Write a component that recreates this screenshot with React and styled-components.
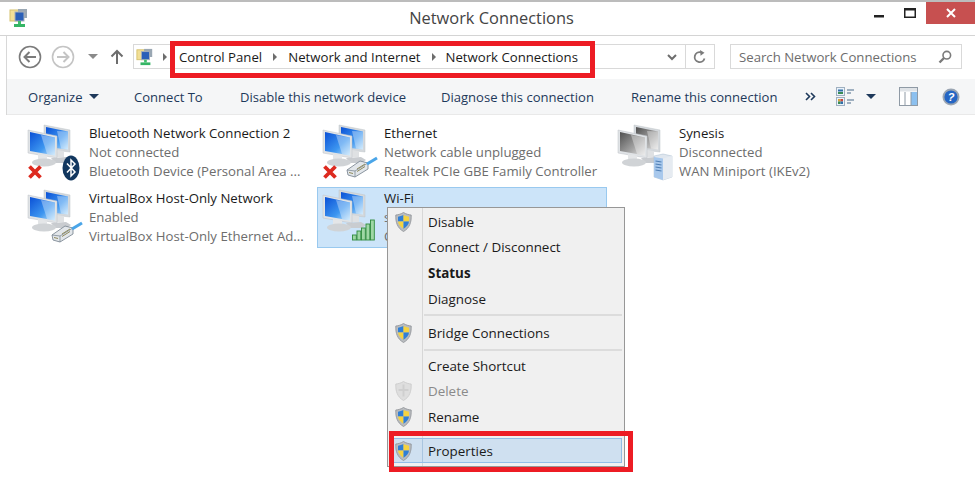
import React from "react";
import styled, { createGlobalStyle } from "styled-components";

const GlobalStyle = createGlobalStyle`
  html, body { margin: 0; padding: 0; background: #fff; }
  body { font-family: "Open Sans", "Noto Sans", sans-serif; font-size: 13.2px; }
`;

const Window = styled.div`
  position: relative;
  width: 975px;
  height: 490px;
  overflow: hidden;
  background: #fff;
  border-top: 2px solid #bcbcbc;
  box-sizing: border-box;
`;

const TitleBar = styled.div`
  height: 33px;
  display: flex;
  align-items: flex-start;
  padding-left: 9px;
  background: #fff;
  border-bottom: 1px solid #d4d4d4;
`;

const AppIcon = styled.div`
  margin-top: 6px;
  width: 20px;
`;

const Title = styled.div`
  flex: 1;
  text-align: center;
  font-size: 16.4px;
  line-height: 31px;
  color: #444;
  padding-left: 90px;
`;

const WinButtons = styled.div`
  display: flex;
  align-items: flex-start;
`;

const WinBtn = styled.div`
  width: ${(p) => p.$w}px;
  height: 22px;
  box-sizing: border-box;
  padding-top: ${(p) => p.$top || 0}px;
  display: flex;
  align-items: center;
  justify-content: center;
  background: ${(p) => (p.$close ? "#c75050" : "transparent")};
`;

const Header = styled.div`
  margin-left: 6px;
  border-left: 1px solid #d8d8d8;
`;

const NavRow = styled.div`
  height: 43px;
  display: flex;
  align-items: center;
  box-sizing: border-box;
  padding: 0 0 2px 11px;
`;

const NavBtn = styled.div`
  width: ${(p) => p.$w}px;
  flex: none;
  display: flex;
  justify-content: center;
  align-items: center;
`;

const AddressBox = styled.div`
  width: 582px;
  height: 25px;
  flex: none;
  box-sizing: border-box;
  border: 1px solid #d9d9d9;
  display: flex;
  align-items: center;
  padding-left: 2px;
`;

const Crumb = styled.span`
  color: #1a1a1a;
  white-space: nowrap;
`;

const CrumbSep = styled.span`
  width: 0;
  height: 0;
  border-left: 4px solid #6d6d6d;
  border-top: 4px solid transparent;
  border-bottom: 4px solid transparent;
  margin: 0 ${(p) => p.$right || 10}px 0 ${(p) => p.$left || 10}px;
`;

const AddressEnd = styled.div`
  margin-left: auto;
  display: flex;
  align-items: center;
  height: 100%;
`;

const RefreshCell = styled.div`
  width: 28px;
  height: 100%;
  border-left: 1px solid #d9d9d9;
  margin-left: 8px;
  display: flex;
  align-items: center;
  justify-content: center;
`;

const SearchBox = styled.div`
  width: 232px;
  height: 25px;
  flex: none;
  box-sizing: border-box;
  border: 1px solid #d9d9d9;
  margin-left: 15px;
  display: flex;
  align-items: center;
  justify-content: space-between;
  padding: 0 9px 0 8px;
  color: #6d6d6d;
`;

const CommandBar = styled.div`
  height: 35px;
  display: flex;
  align-items: center;
  background: #f5f6f7;
  border-bottom: 1px solid #e9e9e9;
  padding-left: 21px;
  color: #1e395b;
  font-size: 13.05px;
`;

const Command = styled.div`
  width: ${(p) => p.$w}px;
  display: flex;
  align-items: center;
  white-space: nowrap;
  flex: none;
`;

const DownCaret = styled.span`
  width: 0;
  height: 0;
  border-top: 5px solid ${(p) => p.$color || "#1e395b"};
  border-left: 5px solid transparent;
  border-right: 5px solid transparent;
  margin-left: ${(p) => p.$m || 6}px;
`;

const Grid = styled.div`
  display: grid;
  grid-template-columns: repeat(3, 295px);
  grid-auto-rows: 61px;
  row-gap: 4px;
  padding: 7px 0 0 22px;
`;

const Tile = styled.div`
  width: 290px;
  box-sizing: border-box;
  display: flex;
  border: 1px solid ${(p) => (p.$selected ? "#99c9ef" : "transparent")};
  background: ${(p) => (p.$selected ? "#cce4f9" : "transparent")};
  padding-left: 4px;
`;

const TileIcon = styled.div`
  width: 62px;
  flex: none;
`;

const TileText = styled.div`
  display: flex;
  flex-direction: column;
  padding-top: 1px;
  min-width: 0;
`;

const TileName = styled.div`
  color: #1a1a1a;
  line-height: 19px;
  white-space: nowrap;
`;

const TileLine = styled.div`
  color: #6d6d6d;
  line-height: 19px;
  white-space: nowrap;
`;

const Menu = styled.div`
  position: absolute;
  left: 387px;
  top: 205px;
  width: 238px;
  height: 260px;
  box-sizing: border-box;
  border: 1px solid #979797;
  padding: 1px 2px;
  font-size: 13.4px;
  background: linear-gradient(to right, #f0f0f0 34px, #d7d7d7 34px, #d7d7d7 35px, #f0f0f0 35px);
`;

const MenuRow = styled.div`
  height: 25.6px;
  box-sizing: border-box;
  display: flex;
  align-items: center;
  color: ${(p) => (p.$disabled ? "#8a8a8a" : "#1a1a1a")};
  font-weight: ${(p) => (p.$bold ? 700 : 400)};
  border: 1px solid ${(p) => (p.$active ? "#92bde6" : "transparent")};
  background: ${(p) =>
    p.$active
      ? "linear-gradient(to right, #cfe0f0 31px, #a9c5df 31px, #a9c5df 32px, #cfe0f0 32px)"
      : "transparent"};
`;

const MenuIcon = styled.div`
  width: 37px;
  flex: none;
  display: flex;
  justify-content: center;
  padding-right: 12px;
  box-sizing: border-box;
`;

const MenuSep = styled.div`
  height: 2px;
  margin: ${(p) => p.$top}px 0 ${(p) => p.$bottom}px 34px;
  background: #dcdcdc;
`;

const RedBox = styled.div`
  position: absolute;
  box-sizing: border-box;
  border: 5px solid #ed1c24;
  left: ${(p) => p.$x}px;
  top: ${(p) => p.$y}px;
  width: ${(p) => p.$w}px;
  height: ${(p) => p.$h}px;
`;

const ControlPanelIcon = ({ size = 20 }) => (
  <svg width={size} height={size} viewBox="0 0 20 20">
    <rect x="1" y="2" width="9" height="11" fill="#f2df96" stroke="#d6c16c" />
    <rect x="9" y="1" width="9" height="9" fill="#9aa7b3" />
    <rect x="6" y="4" width="9" height="9" fill="#2a5fb8" stroke="#a7b0ba" />
    <rect x="9" y="13" width="3" height="3" fill="#3fbf6a" />
    <rect x="5" y="16" width="11" height="3" fill="#35b565" />
  </svg>
);

const BackIcon = ({ faded }) => {
  const c = faded ? "#c4c4c4" : "#7b7b7b";
  return (
    <svg width="24" height="24" viewBox="0 0 24 24" fill="none">
      <circle cx="12" cy="12" r="10.5" stroke={c} strokeWidth="1.6" />
      <path
        d={faded ? "M6 12h11M12.500 7l5 5-5 5" : "M18 12H7M11.500 7l-5 5 5 5"}
        stroke={c}
        strokeWidth="2"
      />
    </svg>
  );
};

const UpIcon = () => (
  <svg width="14" height="16" viewBox="0 0 14 16" fill="none">
    <path d="M7 15V2M1.500 7.500L7 2l5.500 5.500" stroke="#6d6d6d" strokeWidth="2" />
  </svg>
);

const ChevronIcon = () => (
  <svg width="10" height="8" viewBox="0 0 10 8" fill="none">
    <path d="M1 2l4 4 4-4" stroke="#6d6d6d" strokeWidth="2" />
  </svg>
);

const RefreshIcon = () => (
  <svg width="14" height="14" viewBox="0 0 14 14" fill="none">
    <path d="M11.500 8.500A5 5 0 1 1 8 2.300" stroke="#7b7b7b" strokeWidth="1.800" />
    <path d="M7 0l4.500 2.800L7.600 5.800z" fill="#7b7b7b" />
  </svg>
);

const SearchIcon = () => (
  <svg width="14" height="14" viewBox="0 0 14 14" fill="none">
    <circle cx="8.800" cy="5.200" r="3.800" stroke="#7b7b7b" strokeWidth="1.600" />
    <path d="M6 8L1.500 12.500" stroke="#7b7b7b" strokeWidth="2.400" />
  </svg>
);

const ChevronsIcon = () => (
  <svg width="11" height="9" viewBox="0 0 11 9" fill="none">
    <path d="M1 1l3.500 3.500L1 8M6 1l3.500 3.500L6 8" stroke="#1e395b" strokeWidth="1.600" />
  </svg>
);

const ViewIcon = () => (
  <svg width="19" height="19" viewBox="0 0 19 19">
    <rect x="0.500" y="0.500" width="8" height="8" fill="#eaf2fb" stroke="#9fb0c0" />
    <rect x="2" y="2.500" width="5" height="2" fill="#2f6fa8" />
    <rect x="2" y="5" width="5" height="2" fill="#3a8c55" />
    <rect x="0.500" y="10.500" width="8" height="8" fill="#eaf2fb" stroke="#9fb0c0" />
    <rect x="2" y="12" width="2.500" height="2.500" fill="#d9a13a" />
    <rect x="4.500" y="12" width="2.500" height="2.500" fill="#c9473c" />
    <rect x="2" y="14.500" width="2.500" height="2.500" fill="#3a8c55" />
    <rect x="4.500" y="14.500" width="2.500" height="2.500" fill="#2f6fa8" />
    <path d="M11 3h7M11 6h4M11 13h7M11 16h4" stroke="#4a6a8a" strokeWidth="1.200" />
  </svg>
);

const PaneIcon = () => (
  <svg width="19" height="19" viewBox="0 0 19 19">
    <rect x="0.500" y="0.500" width="18" height="18" fill="#fff" stroke="#8f9aa5" />
    <rect x="1" y="1" width="17" height="3.500" fill="#dfe3e7" />
    <rect x="12" y="5" width="6" height="13" fill="#8cc0ef" />
    <path d="M6 5v13M12 5v13" stroke="#8f9aa5" strokeWidth="1" />
  </svg>
);

const HelpIcon = () => (
  <svg width="18" height="18" viewBox="0 0 18 18">
    <circle cx="9" cy="9" r="8.500" fill="#9aa5b2" />
    <circle cx="9" cy="9" r="6.600" fill="#2465c4" />
    <text x="9" y="13" textAnchor="middle" fontSize="11" fontWeight="700" fontStyle="italic" fill="#fff" fontFamily="Liberation Sans, sans-serif">
      ?
    </text>
  </svg>
);

const ShieldIcon = ({ off }) => (
  <svg width="17" height="20" viewBox="0 0 17 20">
    <path
      d="M8.500 0.500C6 2 3.500 2.800 0.800 3c-.3 7 1.400 13 7.700 16.500C14.800 16 16.500 10 16.200 3 13.500 2.800 11 2 8.500 0.500z"
      fill={off ? "#dedede" : "#b9bcbf"}
      stroke={off ? "#c9c9c9" : "#8d9095"}
      strokeWidth="0.800"
    />
    {off ? (
      <path d="M8.500 3.500v12M3.500 9h10" stroke="#cfcfcf" strokeWidth="2" />
    ) : (
      <>
        <path d="M3 4.800c2-.3 3.800-.9 5.500-1.800V9.500H3z" fill="#2f7fd6" />
        <path d="M8.500 3c1.700.9 3.500 1.500 5.500 1.800L14 9.500H8.500z" fill="#f5d33f" />
        <path d="M3 9.500h5.500v7.300C5.300 15 3.400 12.500 3 9.500z" fill="#f5d33f" />
        <path d="M8.500 9.500H14c-.4 3-2.300 5.500-5.500 7.300z" fill="#2f7fd6" />
      </>
    )}
  </svg>
);

const NetworkIcon = ({ gray, badge, plug, cross }) => {
  const id = gray ? "scrGray" : "scrBlue";
  return (
    <svg width="58" height="60" viewBox="0 0 58 60">
      <defs>
        <linearGradient id={id} x1="0" y1="0" x2="1" y2="1">
          <stop offset="0" stopColor={gray ? "#4f4f4f" : "#0a50d6"} />
          <stop offset="0.6" stopColor={gray ? "#a3a3a3" : "#3d96f0"} />
          <stop offset="1" stopColor={gray ? "#e4e4e4" : "#bfe2fa"} />
        </linearGradient>
      </defs>
      {/* back monitor */}
      <path d="M17 2l26 5v22l-26-3z" fill="#d4d8dc" stroke="#bfc4c9" strokeWidth="0.500" />
      <path d="M19 4l22 4.500V26.500l-22-2.500z" fill={`url(#${id})`} />
      <path d="M30 8l11 .5V26.500l-7-1z" fill="#fff" opacity="0.35" />
      <path d="M30 27l7 1v6l-7 0z" fill="#dfe1e3" />
      <path d="M24 35l15 -1 5 3-4 3-12 0z" fill="#c9ccd0" />
      {/* front monitor */}
      <path d="M1 7l29 6v22L1 30z" fill="#e0e3e6" stroke="#bcc1c6" strokeWidth="0.500" />
      <path d="M3 9l25 5.500V32.500L3 28z" fill={`url(#${id})`} />
      <path d="M14 12l14 2.500V32.500l-8-1.500z" fill="#fff" opacity="0.35" />
      <path d="M11 31l9 1.500V38H11z" fill="#e4e6e8" />
      <ellipse cx="17" cy="39.500" rx="12" ry="4" fill="#d0d3d6" />
      {cross && (
        <path d="M2.500 43.500l11 11M13.500 43.500l-11 11" stroke="#dd2a1f" strokeWidth="3.800" />
      )}
      {badge === "bt" && (
        <g>
          <ellipse cx="44" cy="45" rx="8.500" ry="12.500" fill="#12375f" />
          <path d="M40 40.500l8 8.500-4 4V37l4 4-8 8.500" fill="none" stroke="#fff" strokeWidth="1.500" />
        </g>
      )}
      {plug && (
        <g>
          <path d="M25 47l13-9 8 2v6l-13 8-7-2z" fill="#e2e6ea" stroke="#7f8a95" strokeWidth="0.900" />
          <path d="M33 54v-6l13-8M25 47l8 1" fill="none" stroke="#7f8a95" strokeWidth="0.800" />
          <path d="M27 49.500l4 1M35 46l8-5M35 48.500l8-5" stroke="#8f8a5c" strokeWidth="1" />
          <path d="M45 41l10-6" stroke="#4aa5e8" strokeWidth="3" />
        </g>
      )}
      {badge === "wifi" && (
        <g fill="#9fd7a5" stroke="#2f8a3c" strokeWidth="0.900">
          <rect x="30.500" y="47" width="3.800" height="5" />
          <rect x="35" y="43" width="3.800" height="9" />
          <rect x="39.500" y="40" width="3.800" height="12" />
          <rect x="44" y="36" width="3.800" height="16" />
          <rect x="48.500" y="32" width="3.800" height="20" />
        </g>
      )}
      {badge === "server" && (
        <g>
          <path d="M37 33l9-2 9 2v21l-9 3-9-3z" fill="#dfe6ee" stroke="#a9bccf" strokeWidth="0.500" />
          <path d="M37 34l9 1.500V57l-9-3z" fill="#a8c8ec" />
          <path d="M46 35.500V57l9-3V33z" fill="#e6ebf1" />
          <path d="M38.500 38l6 1M38.500 41l6 1M38.500 44l6 1M38.500 47l6 1" stroke="#4f7fb5" strokeWidth="1.200" />
        </g>
      )}
    </svg>
  );
};

const items = [
  { name: "Bluetooth Network Connection 2", status: "Not connected", device: "Bluetooth Device (Personal Area ...", badge: "bt", cross: true },
  { name: "Ethernet", status: "Network cable unplugged", device: "Realtek PCIe GBE Family Controller", plug: true, cross: true },
  { name: "Synesis", status: "Disconnected", device: "WAN Miniport (IKEv2)", badge: "server", gray: true },
  { name: "VirtualBox Host-Only Network", status: "Enabled", device: "VirtualBox Host-Only Ethernet Ad...", plug: true },
  { name: "Wi-Fi", status: "s", device: "C", badge: "wifi", selected: true },
];

const Adapter = ({ item }) => (
  <Tile $selected={item.selected}>
    <TileIcon>
      <NetworkIcon gray={item.gray} badge={item.badge} plug={item.plug} cross={item.cross} />
    </TileIcon>
    <TileText>
      <TileName>{item.name}</TileName>
      <TileLine>{item.status}</TileLine>
      <TileLine>{item.device}</TileLine>
    </TileText>
  </Tile>
);

export default function App() {
  return (
    <Window>
      <GlobalStyle />
      <TitleBar>
        <AppIcon>
          <ControlPanelIcon />
        </AppIcon>
        <Title>Network Connections</Title>
        <WinButtons>
          <WinBtn $w={30} $top={6}>
            <svg width="10" height="3"><rect width="10" height="2.500" fill="#222" /></svg>
          </WinBtn>
          <WinBtn $w={32}>
            <svg width="12" height="10"><rect x="0.750" y="0.750" width="10.500" height="8.500" fill="none" stroke="#222" strokeWidth="1.500" /><rect width="12" height="2.500" fill="#222" /></svg>
          </WinBtn>
          <WinBtn $w={49} $close>
            <svg width="10" height="10"><path d="M1 1l8 8M9 1l-8 8" stroke="#fff" strokeWidth="2" /></svg>
          </WinBtn>
        </WinButtons>
      </TitleBar>
      <Header>
        <NavRow>
          <NavBtn $w={24}><BackIcon /></NavBtn>
          <NavBtn $w={42}><BackIcon faded /></NavBtn>
          <NavBtn $w={16}><DownCaret $color="#8a8a8a" $m={1} /></NavBtn>
          <NavBtn $w={33}><UpIcon /></NavBtn>
          <AddressBox>
            <ControlPanelIcon size={18} />
            <CrumbSep $left={9} $right={12} />
            <Crumb>Control Panel</Crumb>
            <CrumbSep $left={11} $right={11} />
            <Crumb>Network and Internet</Crumb>
            <CrumbSep $left={11} />
            <Crumb>Network Connections</Crumb>
            <AddressEnd>
              <ChevronIcon />
              <RefreshCell><RefreshIcon /></RefreshCell>
            </AddressEnd>
          </AddressBox>
          <SearchBox>
            Search Network Connections
            <SearchIcon />
          </SearchBox>
        </NavRow>
        <CommandBar>
          <Command $w={106}>Organize<DownCaret /></Command>
          <Command $w={106}>Connect To</Command>
          <Command $w={201}>Disable this network device</Command>
          <Command $w={190}>Diagnose this connection</Command>
          <Command $w={174}>Rename this connection</Command>
          <Command $w={31}><ChevronsIcon /></Command>
          <Command $w={63}><ViewIcon /><DownCaret $m={11} /></Command>
          <Command $w={43}><PaneIcon /></Command>
          <Command $w={18}><HelpIcon /></Command>
        </CommandBar>
      </Header>
      <Grid>
        {items.map((item) => (
          <Adapter key={item.name} item={item} />
        ))}
      </Grid>
      <Menu>
        <MenuRow><MenuIcon><ShieldIcon /></MenuIcon>Disable</MenuRow>
        <MenuRow><MenuIcon />Connect / Disconnect</MenuRow>
        <MenuRow $bold><MenuIcon />Status</MenuRow>
        <MenuRow><MenuIcon />Diagnose</MenuRow>
        <MenuSep $top={3} $bottom={4} />
        <MenuRow><MenuIcon><ShieldIcon /></MenuIcon>Bridge Connections</MenuRow>
        <MenuSep $top={3} $bottom={2} />
        <MenuRow><MenuIcon />Create Shortcut</MenuRow>
        <MenuRow $disabled><MenuIcon><ShieldIcon off /></MenuIcon>Delete</MenuRow>
        <MenuRow><MenuIcon><ShieldIcon /></MenuIcon>Rename</MenuRow>
        <MenuSep $top={3} $bottom={3} />
        <MenuRow $active><MenuIcon><ShieldIcon /></MenuIcon>Properties</MenuRow>
      </Menu>
      <RedBox $x={170} $y={39} $w={425} $h={37} />
      <RedBox $x={389} $y={429} $w={244} $h={41} />
    </Window>
  );
}
